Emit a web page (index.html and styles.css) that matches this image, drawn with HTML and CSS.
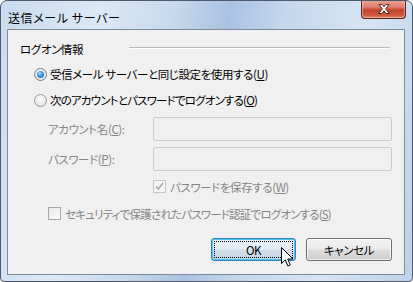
FILE: index.html
```html
<!DOCTYPE html>
<html lang="ja">
<head>
<meta charset="utf-8">
<link rel="stylesheet" href="styles.css">
</head>
<body>
<div class="window">
  <div class="titlebar">
    <span class="title">送信メール サーバー</span>
    <div class="close">
      <svg width="20" height="12" viewBox="0 0 20 12">
        <path d="M5 1.5h3.2l1.8 2.3 1.8-2.3H15l-3.3 4.3 3.5 4.7H12l-2-2.7-2 2.7H4.8l3.5-4.7z" fill="#fff" stroke="#5a2a22" stroke-width="1" stroke-linejoin="round"/>
      </svg>
    </div>
  </div>
  <div class="client">
    <div class="group-head">
      <span class="group-label">ログオン情報</span>
      <span class="group-line"></span>
    </div>
    <div class="radio-row first">
      <span class="radio on"><span class="dot"></span></span>
      <span class="lbl">受信メール&nbsp;サーバーと同じ設定を使用する(<u>U</u>)</span>
    </div>
    <div class="radio-row">
      <span class="radio"></span>
      <span class="lbl tight">次のアカウントとパスワードでログオンする(<u>O</u>)</span>
    </div>
    <div class="field-row first">
      <span class="field-label">アカウント名(<u>C</u>):</span>
      <span class="input"></span>
    </div>
    <div class="field-row">
      <span class="field-label">パスワード(<u>P</u>):</span>
      <span class="input"></span>
    </div>
    <div class="check-row save">
      <span class="check disabled">
        <svg width="11" height="11" viewBox="0 0 11 11"><path d="M2 5.5l2.3 2.6L9 2" fill="none" stroke="#a8a8a8" stroke-width="1.6"/></svg>
      </span>
      <span class="lbl dim">パスワードを保存する(<u>W</u>)</span>
    </div>
    <div class="check-row spa">
      <span class="check"></span>
      <span class="lbl dim tight">セキュリティで保護されたパスワード認証でログオンする(<u>S</u>)</span>
    </div>
    <div class="buttons">
      <div class="btn default"><span class="focus">OK</span></div>
      <div class="btn">キャンセル</div>
    </div>
  </div>
  <svg class="cursor" width="13" height="21" viewBox="0 0 13 21">
    <path d="M0.5 0.5v16l3.8-3.7 2.6 6.2 2.4-1-2.6-6h5.3z" fill="#fff" stroke="#000" stroke-width="1" stroke-linejoin="miter"/>
  </svg>
</div>
</body>
</html>
```
FILE: styles.css
```css
html, body {
  margin: 0;
  padding: 0;
  background: #fff;
}
body {
  font-family: "Noto Sans CJK JP", "Noto Sans", sans-serif;
  font-feature-settings: "palt";
  font-size: 11.5px;
  letter-spacing: -0.4px;
  color: #000;
}
.window {
  position: relative;
  width: 413px;
  height: 282px;
  box-sizing: border-box;
  border: 1px solid #4d5b6c;
  border-radius: 7px 7px 4px 4px;
  background: linear-gradient(100deg, #c9dbef 0%, #dbe8f6 22%, #c6d9ee 38%, #a8c3e1 50%, #c3d7ed 62%, #d6e5f4 80%, #bdd2ea 100%);
  display: flex;
  flex-direction: column;
  overflow: hidden;
}
.titlebar {
  height: 28px;
  display: flex;
  align-items: flex-start;
  flex-shrink: 0;
}
.title {
  margin: 8px 0 0 7px;
  font-size: 12px;
  line-height: 17px;
  letter-spacing: 0.6px;
  color: #000;
}
.close {
  margin-left: auto;
  margin-right: 6px;
  margin-top: -1px;
  width: 45px;
  height: 19px;
  box-sizing: border-box;
  border: 1px solid #5b2219;
  border-top: none;
  border-radius: 0 0 4px 4px;
  background: linear-gradient(#eaa696 0%, #dc7f6c 40%, #c2412c 55%, #cc5a40 85%, #e0896f 100%);
  box-shadow: inset 0 0 0 1px rgba(255, 210, 200, 0.5);
  display: flex;
  align-items: center;
  justify-content: center;
}
.close svg { display: block; }
.client {
  flex: 1;
  margin: 0 7px 6px 6px;
  border: 1px solid #7c8a9b;
  background: #f0f0f0;
  padding: 12px 12px 0 12px;
  display: flex;
  flex-direction: column;
}
.group-head {
  display: flex;
  align-items: center;
  height: 14px;
  margin-right: 2px;
}
.group-label {
  line-height: 14px;
  white-space: nowrap;
}
.group-line {
  flex: 1;
  margin-left: 46px;
  height: 0;
  border-top: 1px solid #b9b9b9;
  border-bottom: 1px solid #fff;
  margin-top: -2px;
}
.radio-row {
  display: flex;
  align-items: center;
  height: 16px;
  margin-top: 10px;
  padding-left: 14px;
}
.radio {
  width: 13px;
  height: 13px;
  box-sizing: border-box;
  border-radius: 50%;
  border: 1px solid #9b9b9b;
  background: radial-gradient(circle at 50% 40%, #fdfdfd 0%, #e6e6e6 70%, #d6d6d6 100%);
  margin-right: 3px;
  display: flex;
  align-items: center;
  justify-content: center;
}
.radio.on { border-color: #6d7f92; }
.dot {
  width: 7px;
  height: 7px;
  border-radius: 50%;
  background: radial-gradient(circle at 40% 35%, #b8e3ff 0%, #3b9ae2 40%, #0f5ea8 100%);
}
.lbl {
  line-height: 16px;
  white-space: nowrap;
}
.tight { letter-spacing: -0.8px; }
.dim { color: #858585; }
.field-row {
  display: flex;
  align-items: center;
  height: 24px;
  margin-top: 6px;
  padding-left: 28px;
}
.field-row.first { margin-top: 9px; }
.field-label {
  width: 105px;
  color: #858585;
  line-height: 16px;
  white-space: nowrap;
}
.input {
  width: 240px;
  height: 24px;
  box-sizing: border-box;
  border: 1px solid #cdcdcd;
  border-radius: 2px;
  background: #f0f0f0;
}
.check-row {
  display: flex;
  align-items: center;
  height: 15px;
}
.check-row.save {
  margin-top: 8px;
  padding-left: 133px;
}
.check-row.spa {
  margin-top: 12px;
  padding-left: 28px;
}
.check {
  width: 13px;
  height: 13px;
  box-sizing: border-box;
  border: 1px solid #a6a6a6;
  background: linear-gradient(135deg, #e9e9e9, #fbfbfb);
  margin-right: 4px;
  display: flex;
  align-items: center;
  justify-content: center;
}
.check.disabled {
  border-color: #c6c6c6;
  background: #f4f4f4;
}
.check svg { display: block; }
.buttons {
  display: flex;
  justify-content: flex-end;
  gap: 10px;
  margin-top: 17px;
}
.btn {
  width: 85px;
  height: 23px;
  box-sizing: border-box;
  border: 1px solid #707070;
  border-radius: 3px;
  background: linear-gradient(#f2f2f2 0%, #ebebeb 48%, #dddddd 52%, #cfcfcf 100%);
  box-shadow: inset 0 0 0 1px rgba(255, 255, 255, 0.7);
  display: flex;
  align-items: center;
  justify-content: center;
  line-height: 16px;
}
.btn:last-child { width: 86px; }
.btn.default {
  border-color: #3c7fb1;
  background: linear-gradient(#eaf2f8 0%, #e2ecf4 48%, #d2dfea 52%, #c4d4e2 100%);
  box-shadow: inset 0 0 0 1px #48c6f3;
  padding: 2px;
}
.focus {
  flex: 1;
  align-self: stretch;
  border: 1px dotted #000;
  display: flex;
  align-items: center;
  justify-content: center;
}
.cursor {
  position: absolute;
  left: 280px;
  top: 246px;
}
```
